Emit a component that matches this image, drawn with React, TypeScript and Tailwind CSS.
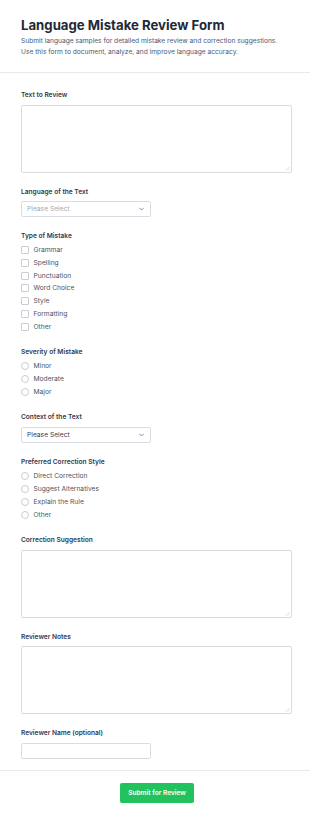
import React from "react";

const font = { fontFamily: "Inter, 'Noto Sans', sans-serif" };

function Label({ children, mb = "mb-[5.5px]" }: { children: React.ReactNode; mb?: string }) {
  return (
    <div className={`text-[6.6px] leading-[8px] h-[8px] font-semibold text-[#2f3a4f] ${mb}`}>{children}</div>
  );
}

function TextArea() {
  return (
    <div className="relative">
      <textarea className="block w-full h-[68px] border border-[#d9dce2] rounded-[2px] bg-white resize-none outline-none" />
      <svg width="5" height="5" viewBox="0 0 5 5" className="absolute right-[2px] bottom-[2px]">
        <path d="M4.5 1L1 4.5M4.5 3L3 4.5" stroke="#c4c8ce" strokeWidth="0.6" />
      </svg>
    </div>
  );
}

function Chevron() {
  return (
    <svg width="5" height="4" viewBox="0 0 10 6" fill="none" className="shrink-0">
      <path d="M1 1l4 4 4-4" stroke="#6b7280" strokeWidth="1.6" strokeLinecap="round" strokeLinejoin="round" />
    </svg>
  );
}

function Select({ dark }: { dark?: boolean }) {
  return (
    <div className="w-[130px] h-[16px] border border-[#d9dce2] rounded-[2px] bg-white flex items-center justify-between pl-[5px] pr-[6px]">
      <span className={`text-[6.7px] leading-[8px] ${dark ? "text-[#374151]" : "text-[#a3a9b4]"}`}>Please Select</span>
      <Chevron />
    </div>
  );
}

function CheckRow({ label, radio }: { label: string; radio?: boolean }) {
  return (
    <div className="h-[12.85px] flex items-center gap-[4.5px]">
      <span
        className={`w-[8px] h-[8px] border border-[#c9cdd4] bg-white shrink-0 ${radio ? "rounded-full" : "rounded-[1px]"}`}
      />
      <span className="text-[6.7px] leading-[8px] text-[#4b5563]">{label}</span>
    </div>
  );
}

function CheckGroup({ items, radio }: { items: string[]; radio?: boolean }) {
  return (
    <div className="flex flex-col">
      {items.map((i) => (
        <CheckRow key={i} label={i} radio={radio} />
      ))}
    </div>
  );
}

export default function App() {
  return (
    <div className="w-[310px] min-h-[818px] bg-white" style={font}>
      <div className="pl-[21px] pr-[18px] pt-[17px] pb-[14px]">
        <h1 className="text-[13.2px] leading-[16px] font-bold text-[#1f2937]">
          Language Mistake Review Form
        </h1>
        <p className="mt-[3px] text-[6.65px] leading-[11px] text-[#4a5a76]">
          Submit language samples for detailed mistake review and correction suggestions.
          <br />
          Use this form to document, analyze, and improve language accuracy.
        </p>
      </div>
      <div className="h-px bg-[#e7e9ed]" />
      <div className="pl-[21px] pr-[18px] pt-[18px] pb-[11px] flex flex-col gap-[15px]">
        <div>
          <Label>Text to Review</Label>
          <TextArea />
        </div>
        <div>
          <Label>Language of the Text</Label>
          <Select />
        </div>
        <div>
          <Label mb="mb-[3.5px]">Type of Mistake</Label>
          <CheckGroup items={["Grammar", "Spelling", "Punctuation", "Word Choice", "Style", "Formatting", "Other"]} />
        </div>
        <div>
          <Label mb="mb-[3.5px]">Severity of Mistake</Label>
          <CheckGroup radio items={["Minor", "Moderate", "Major"]} />
        </div>
        <div>
          <Label>Context of the Text</Label>
          <Select dark />
        </div>
        <div>
          <Label mb="mb-[4px]">Preferred Correction Style</Label>
          <CheckGroup radio items={["Direct Correction", "Suggest Alternatives", "Explain the Rule", "Other"]} />
        </div>
        <div>
          <Label>Correction Suggestion</Label>
          <TextArea />
        </div>
        <div>
          <Label>Reviewer Notes</Label>
          <TextArea />
        </div>
        <div>
          <Label>Reviewer Name (optional)</Label>
          <input className="block w-[130px] h-[16px] border border-[#d9dce2] rounded-[2px] bg-white outline-none" />
        </div>
      </div>
      <div className="h-px bg-[#e7e9ed]" />
      <div className="flex justify-center pt-[12px] pl-[4px]">
        <button className="w-[74px] h-[20px] rounded-[2px] bg-[#22c35e] text-white text-[6.6px] font-semibold leading-[8px]">
          Submit for Review
        </button>
      </div>
    </div>
  );
}
